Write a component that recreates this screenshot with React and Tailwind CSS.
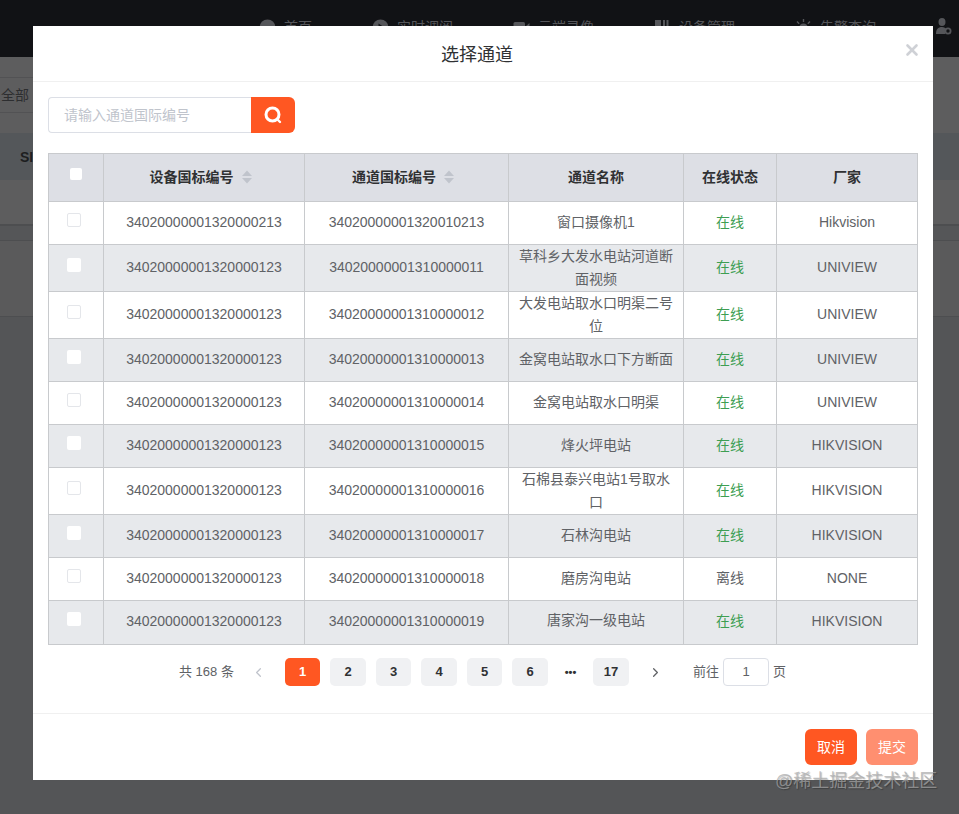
import React from 'react';
import { X, ChevronLeft, ChevronRight } from 'lucide-react';

const rows = [
  { h: 'h-[43px]', dev: '34020000001320000213', ch: '34020000001320010213', name: '窗口摄像机1', status: '在线', vendor: 'Hikvision' },
  { h: 'h-[47px]', tall: true, dev: '34020000001320000123', ch: '34020000001310000011', name: '草科乡大发水电站河道断面视频', status: '在线', vendor: 'UNIVIEW' },
  { h: 'h-[47px]', tall: true, dev: '34020000001320000123', ch: '34020000001310000012', name: '大发电站取水口明渠二号位', status: '在线', vendor: 'UNIVIEW' },
  { h: 'h-[43px]', dev: '34020000001320000123', ch: '34020000001310000013', name: '金窝电站取水口下方断面', status: '在线', vendor: 'UNIVIEW' },
  { h: 'h-[43px]', dev: '34020000001320000123', ch: '34020000001310000014', name: '金窝电站取水口明渠', status: '在线', vendor: 'UNIVIEW' },
  { h: 'h-[43px]', dev: '34020000001320000123', ch: '34020000001310000015', name: '烽火坪电站', status: '在线', vendor: 'HIKVISION' },
  { h: 'h-[47px]', tall: true, dev: '34020000001320000123', ch: '34020000001310000016', name: '石棉县泰兴电站1号取水口', status: '在线', vendor: 'HIKVISION' },
  { h: 'h-[43px]', dev: '34020000001320000123', ch: '34020000001310000017', name: '石林沟电站', status: '在线', vendor: 'HIKVISION' },
  { h: 'h-[43px]', dev: '34020000001320000123', ch: '34020000001310000018', name: '磨房沟电站', status: '离线', vendor: 'NONE' },
  { h: 'h-[44px]', last: true, dev: '34020000001320000123', ch: '34020000001310000019', name: '唐家沟一级电站', status: '在线', vendor: 'HIKVISION' },
];

const navIcons = {
  home: <circle cx="8.5" cy="8.5" r="8" fill="currentColor" />,
  play: (
    <>
      <circle cx="8.5" cy="8.5" r="8" fill="currentColor" />
      <path d="M6.5 4.5 L12.5 8.5 L6.5 12.5 Z" fill="#111215" />
    </>
  ),
  video: (
    <>
      <rect x="0.5" y="3" width="11.5" height="12" rx="1.5" fill="currentColor" />
      <path d="M13 7 L16.5 4 V14 L13 11 Z" fill="currentColor" />
    </>
  ),
  device: (
    <>
      <rect x="1" y="1" width="6" height="15" fill="currentColor" />
      <rect x="9" y="1" width="2" height="15" fill="currentColor" />
      <rect x="12.5" y="1" width="2" height="15" fill="currentColor" />
    </>
  ),
  alarm: (
    <>
      <circle cx="8.5" cy="9" r="4.5" fill="currentColor" />
      <path d="M8.5 0 V3 M2 2.5 L4.2 4.7 M15 2.5 L12.8 4.7 M0 9 H2.5 M14.5 9 H17" stroke="currentColor" strokeWidth="1.4" />
    </>
  ),
};

const navItems = [
  { label: '首页', icon: 'home' },
  { label: '实时调阅', icon: 'play' },
  { label: '云端录像', icon: 'video' },
  { label: '设备管理', icon: 'device' },
  { label: '告警查询', icon: 'alarm' },
];

function SortIcon() {
  return (
    <svg width="12" height="14" viewBox="0 0 12 14" className="ml-[7px] shrink-0">
      <path d="M6 0.5 L11 6 L1 6 Z" fill="#c0c4cc" />
      <path d="M1 8 L11 8 L6 13.5 Z" fill="#c0c4cc" />
    </svg>
  );
}

function Checkbox({ className }) {
  return <span className={`block rounded-[2px] ${className}`} />;
}

export default function App() {
  return (
    <div className="relative w-[959px] h-[814px] overflow-hidden bg-[#545557] font-['Liberation_Sans','Noto_Sans_CJK_SC',sans-serif]">
      {/* dimmed page behind the dialog */}
      <div className="flex items-start h-[57px] bg-[#111215] text-[#55565a] text-sm">
        <div className="flex flex-1 pl-[259px] pt-[17px] gap-[60px]">
          {navItems.map(item => (
            <div key={item.label} className="flex items-center gap-2">
              <svg width="17" height="17" viewBox="0 0 17 17">{navIcons[item.icon]}</svg>
              <span>{item.label}</span>
            </div>
          ))}
        </div>
        <svg width="17" height="17" viewBox="0 0 17 17" className="mr-[7px] mt-[18px]">
          <ellipse cx="7" cy="4" rx="3.5" ry="4" fill="currentColor" />
          <path d="M1 16 C1 11 3 9 7 9 C9 9 11 10 11 11 L10 16 Z" fill="currentColor" />
          <circle cx="13" cy="13" r="2.6" fill="none" stroke="currentColor" strokeWidth="1.8" />
        </svg>
      </div>
      <div className="h-[76px] bg-[#5d5d5e] pt-[20px]">
        <div className="w-[33px] h-[36px] border-y border-[#525254] flex items-center text-sm whitespace-nowrap text-[#2d2e30]">
          <span className="pl-[1px]">全部</span>
        </div>
      </div>
      <div className="h-[47px] bg-[#54575a] flex items-center pl-5 text-sm font-bold text-[#1d1e20]">SI</div>
      <div className="h-[46px] bg-[#5d5d5e] border-b-2 border-[#4d4e50]" />
      <div className="h-[15px] bg-[#555658] border-b border-[#4d4e50]" />
      <div className="h-[76px] bg-[#5a5a5b] border-b border-[#4d4e50]" />

      {/* dialog */}
      <div className="absolute left-[33px] top-[26px] w-[900px] h-[754px] bg-white flex flex-col">
        <div className="relative h-[56px] shrink-0 border-b border-[#f0f0f0] flex items-center justify-center pt-[3px] pr-[12px] text-[18px] text-[#303133]">
          选择通道
          <X size={18} strokeWidth={3.5} className="absolute right-[12px] top-[15px] text-[#cfd1d6]" />
        </div>

        <div className="flex-1 px-[15px] pt-[15px]">
          <div className="flex w-[247px] h-[36px]">
            <div className="flex-1 flex items-center pl-[15px] border border-[#dcdfe6] border-r-0 rounded-l-[4px] text-sm text-[#c0c4cc]">
              请输入通道国际编号
            </div>
            <div className="w-[44px] flex items-center justify-center bg-[#ff5722] rounded-r-[6px]">
              <svg width="18" height="18" viewBox="0 0 18 18" fill="none" stroke="white" strokeWidth="3" strokeLinecap="round">
                <circle cx="8.5" cy="8.5" r="6.5" />
                <path d="M14 14 L16 16" strokeWidth="2.4" />
              </svg>
            </div>
          </div>

          <table className="mt-[20px] w-[869px] table-fixed border-collapse border border-[#c8cacd] text-sm text-[#606266]">
            <colgroup>
              <col className="w-[55px]" />
              <col className="w-[201px]" />
              <col className="w-[204px]" />
              <col className="w-[175px]" />
              <col className="w-[93px]" />
              <col className="w-[141px]" />
            </colgroup>
            <thead>
              <tr className="h-[48px] bg-[#dddfe5] text-[#303133]">
                <th className="border border-[#c8cacd] align-top pt-[14px]">
                  <span className="flex justify-center">
                    <Checkbox className="w-[12px] h-[12px] bg-white" />
                  </span>
                </th>
                <th className="border border-[#c8cacd] pb-[2px]">
                  <span className="flex items-center justify-center pr-[6px] font-bold">设备国标编号<SortIcon /></span>
                </th>
                <th className="border border-[#c8cacd] pb-[2px]">
                  <span className="flex items-center justify-center pr-[6px] font-bold">通道国标编号<SortIcon /></span>
                </th>
                <th className="border border-[#c8cacd] pb-[2px] font-bold">通道名称</th>
                <th className="border border-[#c8cacd] pb-[2px] font-bold">在线状态</th>
                <th className="border border-[#c8cacd] pb-[2px] font-bold">厂家</th>
              </tr>
            </thead>
            <tbody>
              {rows.map((row, i) => {
                const pad = row.last ? 'pb-[4px]' : 'pb-[2px]';
                return (
                  <tr key={row.ch} className={`${row.h} ${i % 2 === 1 ? 'bg-[#e7e9ec]' : 'bg-white'}`}>
                    <td className={`border border-[#c8cacd] align-top ${row.tall ? 'pt-[13px]' : 'pt-[11px]'}`}>
                      <span className="flex justify-center pr-[4px]">
                        <Checkbox className={i % 2 === 1 ? 'w-[14px] h-[14px] bg-white' : 'w-[14px] h-[14px] bg-white border border-[#e4e6ea]'} />
                      </span>
                    </td>
                    <td className={`border border-[#c8cacd] text-center ${pad}`}>{row.dev}</td>
                    <td className={`border border-[#c8cacd] text-center ${pad}`}>{row.ch}</td>
                    <td className={`border border-[#c8cacd] text-center px-2 leading-[23px] ${row.tall ? '' : pad}`}>{row.name}</td>
                    <td className={`border border-[#c8cacd] text-center ${pad} ${row.status === '在线' ? 'text-[#3d9e52]' : ''}`}>{row.status}</td>
                    <td className={`border border-[#c8cacd] text-center ${pad}`}>{row.vendor}</td>
                  </tr>
                );
              })}
            </tbody>
          </table>

          <div className="flex items-center h-[28px] mt-[13px] pl-[131px] text-[13px] text-[#606266]">
            <span className="w-[70px]">共 168 条</span>
            <ChevronLeft size={15} className="text-[#c0c4cc] ml-[2px] mr-[19px]" />
            <div className="flex items-center gap-[10px] text-[13px] font-bold text-[#303133]">
              <span className="w-[35px] h-[28px] rounded-[5px] bg-[#ff5722] text-white flex items-center justify-center">1</span>
              <span className="w-[36px] h-[28px] rounded-[5px] bg-[#f0f1f3] flex items-center justify-center">2</span>
              <span className="w-[35px] h-[28px] rounded-[5px] bg-[#f0f1f3] flex items-center justify-center">3</span>
              <span className="w-[36px] h-[28px] rounded-[5px] bg-[#f0f1f3] flex items-center justify-center">4</span>
              <span className="w-[35px] h-[28px] rounded-[5px] bg-[#f0f1f3] flex items-center justify-center">5</span>
              <span className="w-[36px] h-[28px] rounded-[5px] bg-[#f0f1f3] flex items-center justify-center">6</span>
              <span className="w-[25px] text-center text-[11px]">•••</span>
              <span className="w-[36px] h-[28px] rounded-[5px] bg-[#f0f1f3] flex items-center justify-center">17</span>
            </div>
            <ChevronRight size={15} className="text-[#606266] ml-[19px] mr-[30px]" />
            <span>前往</span>
            <span className="w-[46px] h-[28px] mx-[4px] border border-[#dcdfe6] rounded-[4px] flex items-center justify-center">1</span>
            <span>页</span>
          </div>
        </div>

        <div className="h-[67px] shrink-0 border-t border-[#f0f0f0] flex justify-end items-start gap-[9px] pt-[15px] pr-[15px]">
          <span className="w-[52px] h-[36px] rounded-[6px] bg-[#ff5722] text-white text-sm flex items-center justify-center">取消</span>
          <span className="w-[52px] h-[36px] rounded-[6px] bg-[#ff8f70] text-white text-sm flex items-center justify-center">提交</span>
        </div>
      </div>

      {/* site watermark */}
      <div className="absolute left-[775px] top-[771px] text-[18px] leading-[20px] text-[#a8a8a8]/70 [text-shadow:1px_1px_1px_rgba(0,0,0,0.25)]">@稀土掘金技术社区</div>
    </div>
  );
}
